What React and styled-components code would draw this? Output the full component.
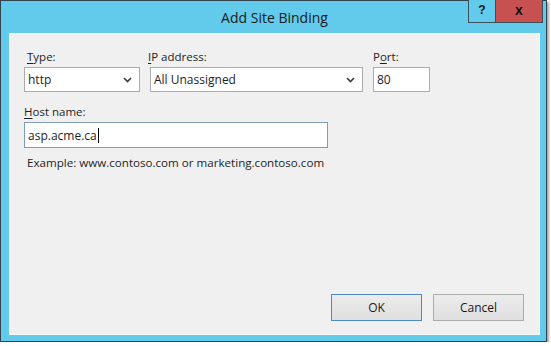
import React from 'react'
import styled, { createGlobalStyle } from 'styled-components'

const GlobalStyle = createGlobalStyle`
  html, body {
    margin: 0;
    padding: 0;
    background: #ffffff;
  }
  body {
    font-family: "Open Sans", "Noto Sans", "Liberation Sans", sans-serif;
    color: #1e1e1e;
  }
`

function Chevron() {
    return (
        <svg width="9" height="6" viewBox="0 0 9 6">
            <path d="M1 1 L4.5 4.5 L8 1" fill="none" stroke="#3a3a3a" strokeWidth="1.6" />
        </svg>
    )
}

function App() {
    return (
        <>
            <GlobalStyle />
            <Window>
                <TitleBar>
                    <span />
                    <Title>Add Site Binding</Title>
                    <Caption>
                        <CaptionButton>?</CaptionButton>
                        <CaptionButton close>x</CaptionButton>
                    </Caption>
                </TitleBar>
                <Client>
                    <Row>
                        <Field width="116px" shift="3px">
                            <Label><u>T</u>ype:</Label>
                            <Select>
                                <span>http</span>
                                <Chevron />
                            </Select>
                        </Field>
                        <Field width="213px" shift="-2px">
                            <Label><u>I</u>P address:</Label>
                            <Select>
                                <span>All Unassigned</span>
                                <Chevron />
                            </Select>
                        </Field>
                        <Field width="57px">
                            <Label>P<u>o</u>rt:</Label>
                            <TextBox>80</TextBox>
                        </Field>
                    </Row>
                    <Field width="304px" top="12px">
                        <Label shift="3px"><u>H</u>ost name:</Label>
                        <TextBox focused tall>
                            asp.acme.ca<Caret />
                        </TextBox>
                    </Field>
                    <Hint>Example: www.contoso.com or marketing.contoso.com</Hint>
                    <Buttons>
                        <Button primary>OK</Button>
                        <Button>Cancel</Button>
                    </Buttons>
                </Client>
            </Window>
        </>
    )
}

export default App

const Window = styled.div`
    width: 547px;
    box-sizing: border-box;
    border: 1px solid #34444e;
    background: #62cbeb;
    padding: 0 6px 6px 8px;
    display: flex;
    flex-direction: column;
    box-shadow: 2px 2px 2px rgba(0, 0, 0, 0.35);
`

const TitleBar = styled.div`
    height: 32px;
    display: grid;
    grid-template-columns: 1fr auto 1fr;
    align-items: start;
`

const Title = styled.div`
    font-size: 14px;
    line-height: 33px;
    color: #1a1a1a;
`

const Caption = styled.div`
    justify-self: end;
    display: flex;
    margin-top: -1px;
    margin-right: -3px;
`

const CaptionButton = styled.div`
    width: ${p => (p.close ? '47px' : '28px')};
    height: 23px;
    box-sizing: border-box;
    border: 1px solid #3b4f5a;
    border-top: none;
    border-left-width: ${p => (p.close ? '0' : '1px')};
    background: ${p => (p.close ? '#c75050' : '#62cbeb')};
    display: flex;
    align-items: center;
    justify-content: center;
    font-family: "Liberation Sans", "DejaVu Sans", sans-serif;
    font-weight: bold;
    font-size: ${p => (p.close ? '14px' : '12px')};
    color: #111;
    padding-bottom: 2px;
`

const Client = styled.div`
    height: 302px;
    box-sizing: border-box;
    background: #f0f0f0;
    border: 1px solid #f9f9f9;
    padding: 15px 15px 13px 14px;
    display: flex;
    flex-direction: column;
`

const Row = styled.div`
    display: flex;
    gap: 10px;
`

const Field = styled.div`
    width: ${p => p.width};
    margin-top: ${p => p.top || '0'};
    display: flex;
    flex-direction: column;
    gap: 2px;

    & > span:first-child {
        margin-left: ${p => p.shift || '0'};
    }
`

const Label = styled.span`
    font-size: 11.5px;
    line-height: 16px;
    margin-left: ${p => p.shift || '0'};

    u {
        text-decoration-thickness: 1px;
        text-underline-offset: 2px;
    }
`

const Select = styled.div`
    height: 25px;
    box-sizing: border-box;
    border: 1px solid #acacac;
    background: #ffffff;
    display: flex;
    align-items: center;
    justify-content: space-between;
    padding: 0 7px 0 3px;
    font-size: 12px;
`

const TextBox = styled.div`
    height: ${p => (p.tall ? '26px' : '25px')};
    box-sizing: border-box;
    border: 1px solid ${p => (p.focused ? '#7f9db9' : '#abadb3')};
    background: #ffffff;
    display: flex;
    align-items: center;
    padding: 0 3px;
    font-size: 12px;
`

const Caret = styled.span`
    display: inline-block;
    width: 1px;
    height: 15px;
    background: #000;
    margin-left: 1px;
`

const Hint = styled.div`
    font-size: 11.6px;
    line-height: 16px;
    margin: 7px 0 0 3px;
`

const Buttons = styled.div`
    margin-top: auto;
    display: flex;
    justify-content: flex-end;
    gap: 11px;
`

const Button = styled.div`
    width: 91px;
    height: 27px;
    box-sizing: border-box;
    border: 1px solid ${p => (p.primary ? '#4f8ac5' : '#acacac')};
    background: linear-gradient(#ececec, #dfdfdf);
    display: flex;
    align-items: center;
    justify-content: center;
    font-size: 12px;
    color: #1a1a1a;
`
